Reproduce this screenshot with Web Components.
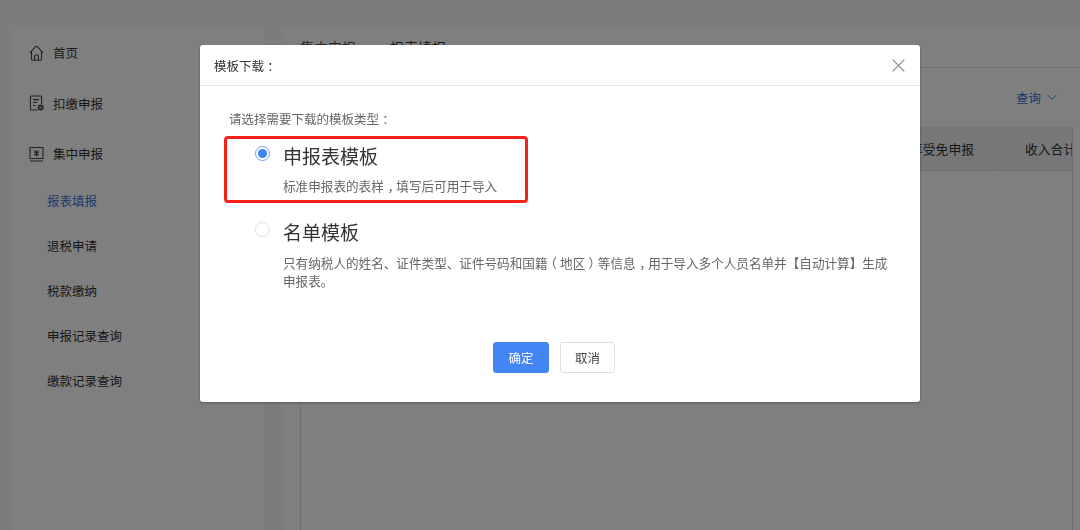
<!DOCTYPE html>
<html lang="zh">
<head>
<meta charset="utf-8">
<title>模板下载</title>
<style>
  html, body { margin: 0; height: 100%; }
  body { font-family: "Noto Sans CJK SC", "Liberation Sans", sans-serif; background: #f6f8fb; overflow: hidden; }
</style>
</head>
<body>
<tax-page>
  <side-menu slot="side"></side-menu>
  <report-panel slot="main"></report-panel>
</tax-page>
<template-dialog></template-dialog>

<script>
class TaxPage extends HTMLElement {
  constructor () {
    super()
    this.attachShadow({ mode: 'open' }).innerHTML = `
      <style>
        :host { display: flex; gap: 18px; height: 530px; padding: 28px 0 0 12px; box-sizing: border-box; }
        ::slotted([slot=side]) { flex: none; width: 252px; }
        ::slotted([slot=main]) { flex: 1; min-width: 0; }
      </style>
      <slot name="side"></slot>
      <slot name="main"></slot>`
  }
}

class SideMenu extends HTMLElement {
  constructor () {
    super()
    this.attachShadow({ mode: 'open' }).innerHTML = `
      <style>
        :host { display: block; background: #fff; font-size: 12.5px; color: #333; }
        .top { display: flex; align-items: center; gap: 9px; height: 49.5px; margin-bottom: 1px; padding-left: 17px; }
        .top svg { width: 15px; height: 16px; fill: none; stroke: #444; stroke-width: 1.1; flex: none; }
        .sub { display: flex; align-items: center; height: 45px; padding-left: 35px; }
        .first { margin-top: -1.5px; }
        .on { color: #3b73d9; }
      </style>
      <div class="top"><svg viewBox="0 0 15 16"><path d="M.8 8 6.6 1.7a1.2 1.2 0 0 1 1.8 0L14.2 8M2.5 6.6v7.6a1 1 0 0 0 1 1h8a1 1 0 0 0 1-1V6.6M5.6 15v-4a1 1 0 0 1 1-1h1.8a1 1 0 0 1 1 1v4"/></svg>首页</div>
      <div class="top"><svg viewBox="0 0 15 16"><path d="M8.5 15H2.4a1 1 0 0 1-1-1V2a1 1 0 0 1 1-1h9.2a1 1 0 0 1 1 1v7M4 4.6h6M4 7.5h4M4 10.5h2.5"/><circle cx="11.7" cy="12.5" r="2.4" fill="#999"/></svg>扣缴申报</div>
      <div class="top"><svg viewBox="0 0 15 16"><path d="M1 1.5h13v11H1zM1 15h13M5.5 4.5l2 2 2-2M5.2 6.8h4.6M5.2 8.6h4.6M7.5 6.5v4"/></svg>集中申报</div>
      <div class="sub on first">报表填报</div>
      <div class="sub">退税申请</div>
      <div class="sub">税款缴纳</div>
      <div class="sub">申报记录查询</div>
      <div class="sub">缴款记录查询</div>`
  }
}

class ReportPanel extends HTMLElement {
  constructor () {
    super()
    this.attachShadow({ mode: 'open' }).innerHTML = `
      <style>
        :host { display: flex; flex-direction: column; background: #fff; font-size: 12.5px; color: #333; }
        .crumbs { display: flex; gap: 34px; height: 40px; padding: 9px 0 0 18px; box-sizing: border-box; border-bottom: 1px solid #e6e6e6; font-size: 14px; color: #555; overflow: hidden; }
        .crumbs b { font-weight: 400; color: #333; }
        .query { display: flex; justify-content: flex-end; align-items: center; gap: 6px; height: 59px; padding-right: 23px; color: #3b73d9; }
        .query svg { width: 10px; height: 7px; fill: none; stroke: #3b73d9; }
        .table { flex: 1; margin: 0 7px 0 18px; border-left: 1px solid #e3e3e3; border-right: 1px solid #e3e3e3; overflow: hidden; }
        .head { display: flex; justify-content: flex-end; height: 44px; background: #eceef2; border-bottom: 1px solid #e3e3e3; font-size: 12.8px; box-sizing: border-box; }
        .head span { display: flex; align-items: center; }
        .a { width: 120px; justify-content: flex-end; padding-right: 23px; border-right: 1px solid #e3e3e3; white-space: nowrap; }
        .b { width: 74px; padding-left: 27px; white-space: nowrap; overflow: hidden; box-sizing: border-box; }
      </style>
      <div class="crumbs"><span>集中申报</span><b>报表填报</b></div>
      <div class="query">查询<svg viewBox="0 0 11 7"><path d="M.8.8 5.5 5.5 10.2.8"/></svg></div>
      <div class="table">
        <div class="head"><span class="a">享受免申报</span><span class="b">收入合计</span></div>
      </div>`
  }
}

class TemplateOption extends HTMLElement {
  constructor () {
    super()
    this.attachShadow({ mode: 'open' }).innerHTML = `
      <style>
        :host { display: grid; grid-template-columns: 15px 1fr; column-gap: 13px; align-items: start; }
        .radio { width: 15px; height: 15px; box-sizing: border-box; margin-top: 4px; border: 1px solid #dcdfe6; border-radius: 50%; background: #fff; }
        :host([checked]) .radio { border-color: #6d9ff5; display: flex; align-items: center; justify-content: center; }
        :host([checked]) .radio::after { content: ""; width: 9px; height: 9px; border-radius: 50%; background: #3f83f8; }
        .title { font-size: 19px; line-height: 28px; color: #333; }
        .desc { font-size: 12.6px; line-height: 18px; color: #666; margin-top: var(--desc-gap, 7px); }
      </style>
      <div class="radio"></div>
      <div>
        <div class="title"><slot name="title"></slot></div>
        <div class="desc"><slot name="desc"></slot></div>
      </div>`
  }
}

class TemplateDialog extends HTMLElement {
  constructor () {
    super()
    this.attachShadow({ mode: 'open' }).innerHTML = `
      <style>
        :host { position: fixed; inset: 0; display: block; background: rgba(0,0,0,.5); }
        .box { position: absolute; left: 200px; top: 45px; width: 720px; height: 357px; box-sizing: border-box; display: flex; flex-direction: column; background: #fff; border-radius: 3px; box-shadow: 0 1px 3px rgba(0,0,0,.3); }
        header { display: flex; align-items: center; justify-content: space-between; height: 41px; box-sizing: border-box; flex: none; padding: 0 15px 0 14px; border-bottom: 1px solid #e8e8e8; font-size: 12.5px; color: #333; }
        header svg { width: 13px; height: 13px; stroke: #888; fill: none; stroke-width: 1.2; }
        .body { flex: 1; padding: 24px 30px 0 29px; }
        .lead { font-size: 12.5px; line-height: 18px; color: #666; }
        .opts { display: flex; flex-direction: column; gap: 23px; margin-top: 14px; padding-left: 26px; }
        /* half width punctuation, padded so the mark sits mid cell */
        .mid { font-feature-settings: "halt"; padding: 0 .25em; }
        .comma { font-feature-settings: "halt"; padding: 0 .2em 0 .3em; }
        footer { display: flex; justify-content: center; gap: 11px; height: 60px; flex: none; padding-right: 12px; }
        button { width: 56px; height: 31px; padding: 0; border-radius: 3px; border: 1px solid #dcdfe6; background: #fff; color: #444; font: 12.5px "Noto Sans CJK SC", sans-serif; }
        button.ok { background: #4285f4; border-color: #4285f4; color: #fff; }
        button.no { width: 55px; }
        .red { position: absolute; left: 24px; top: 91px; width: 304px; height: 67px; box-sizing: border-box; border: 3px solid #f5221b; border-radius: 4px; }
      </style>
      <div class="box">
        <header><span>模板下载<span class="mid">：</span></span><svg viewBox="0 0 13 13"><path d="M.7.7l11.6 11.6M12.3.7.7 12.3"/></svg></header>
        <div class="body">
          <div class="lead">请选择需要下载的模板类型<span class="mid">：</span></div>
          <div class="opts">
            <template-option checked><span slot="title">申报表模板</span><span slot="desc">标准申报表的表样<span class="comma">，</span>填写后可用于导入</span></template-option>
            <template-option style="--desc-gap: 8px"><span slot="title">名单模板</span><span slot="desc">只有纳税人的姓名、证件类型、证件号码和国籍<span class="mid">（</span>地区<span class="mid">）</span>等信息<span class="comma">，</span>用于导入多个人员名单并【自动计算】生成<br>申报表。</span></template-option>
          </div>
        </div>
        <footer><button class="ok">确定</button><button class="no">取消</button></footer>
        <div class="red"></div>
      </div>`
  }
}

customElements.define('tax-page', TaxPage)
customElements.define('side-menu', SideMenu)
customElements.define('report-panel', ReportPanel)
customElements.define('template-option', TemplateOption)
customElements.define('template-dialog', TemplateDialog)
</script>
</body>
</html>
